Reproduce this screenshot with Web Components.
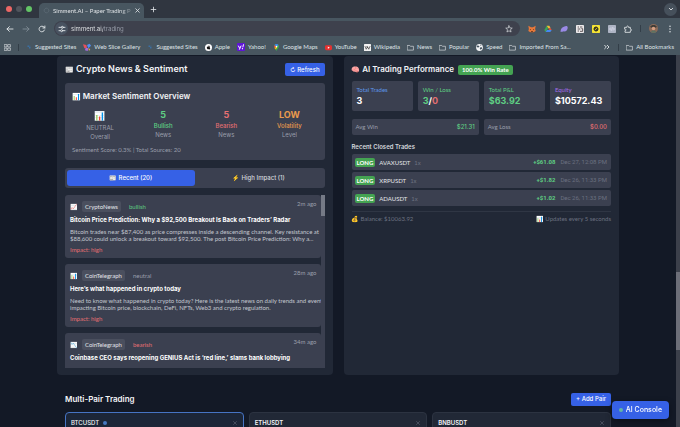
<!DOCTYPE html>
<html lang="en">
<head>
<meta charset="utf-8">
<title>Simment.AI - Paper Trading Platform</title>
<style>
  :root {
    --page: #131926;
    --panel: #212836;
    --card: #3b4050;
    --chip: #4a4f5e;
    --blue: #3661e6;
    --green: #5fce83;
    --red: #e46f72;
    --muted: #9a9fab;
    --dim: #6b7180;
    --small: Lato, "Noto Color Emoji", sans-serif;
  }
  html, body { height: 100%; }
  body {
    margin: 0;
    overflow: hidden;
    background: var(--page);
    color: #f3f4f6;
    font: 6px/8px Inter, "Noto Color Emoji", sans-serif;
  }
</style>
</head>
<body>
<trading-app></trading-app>

<script>
class BaseElement extends HTMLElement {
    constructor(){
        super();
        this.attachShadow({ mode : "open"});
    }
    attr(name){
        return this.getAttribute(name) || "";
    }
    render(){
        const template = document.createElement('template');
        template.innerHTML = `
        <style>
            * { box-sizing: border-box; }
            button { margin: 0; padding: 0; border: 0; background: none; color: inherit; font: inherit; cursor: pointer; }
            a { color: inherit; text-decoration: none; }
            h2, h3, h4, p, ul { margin: 0; padding: 0; font: inherit; }
            svg { display: block; flex: none; }
        </style>
        <style>${this.getStyles()}</style>
        ${this.getTemplate()}`;
        this.shadowRoot.appendChild(template.content.cloneNode(true));
    }
    connectedCallback(){
        if (!this.shadowRoot.childNodes.length) this.render();
    }
}

const stroke = (d, size = 8, width = 1.4) =>
    `<svg width="${size}" height="${size}" viewBox="0 0 12 12" fill="none" stroke="currentColor" stroke-width="${width}" stroke-linecap="round" stroke-linejoin="round" aria-hidden="true">${d}</svg>`;
const draw = (d, size = 8) =>
    `<svg width="${size}" height="${size}" viewBox="0 0 12 12" aria-hidden="true">${d}</svg>`;

const icons = {
    folder: stroke('<path d="M1 2.5h3.6l1.2 1.4H11v6.6H1z"/>', 7, 1.1),
    suggested: draw('<path d="M3 3h3v3H3zM6 6h3v3H6z" fill="#3a6fa3"/><path d="M6 3h3v3H6z" fill="#41617c"/>', 6),
    slice: draw('<path d="M0 2l5 1 1 4-4 1z" fill="#e8505b"/><path d="M6 3l4-2 2 3-4 4z" fill="#4f8df5"/><path d="M4 7l4 1-1 4-4-1z" fill="#a56be0"/><path d="M8 8l3 1-2 3z" fill="#e9b13e"/>', 8),
    apple: draw('<circle cx="6" cy="6" r="6" fill="#fff"/><path d="M6 4.3c1.400-.8 2.600.1 2.800.6-1 .7-.8 2.200.2 2.600-.8 2.200-1.700 2-3 1.600-1.500.5-2.800-.7-2.900-2.500 0-2 1.600-3 2.900-2.300zM6 3.800c0-.9.6-1.500 1.300-1.600 0 .9-.5 1.500-1.300 1.600z" fill="#111"/>', 7),
    yahoo: draw('<rect width="12" height="12" rx="1.500" fill="#5f14d8"/><path d="M2 4l2 4M6.200 4L3.400 10" stroke="#fff" stroke-width="1.500"/><path d="M9.800 2L8.700 6.500" stroke="#fff" stroke-width="1.500"/><circle cx="8.200" cy="8.500" r="1" fill="#fff"/>', 8),
    maps: draw('<path d="M6 0a4.300 4.300 0 0 1 4.300 4.300C10.300 7 7 8.500 6 12 5 8.500 1.700 7 1.700 4.300A4.300 4.300 0 0 1 6 0z" fill="#35a853"/><path d="M2.600 1.700L6 4.300l-3.300 3A5 5 0 0 1 2.600 1.700z" fill="#ea4335"/><path d="M6 0a4.300 4.300 0 0 1 3.500 1.800L6 4.300 2.600 1.700A4.300 4.300 0 0 1 6 0z" fill="#4285f4"/><path d="M2.700 7.300L6 4.300l1 2-2.500 3z" fill="#fbbc04"/><circle cx="6" cy="4.300" r="1.500" fill="#fff"/>', 7),
    youtube: draw('<rect y="2" width="12" height="8.500" rx="2.500" fill="#e5302f"/><path d="M4.800 4.300v3.900L8.200 6.250z" fill="#fff"/>', 7),
    wiki: draw('<rect width="12" height="12" rx="1" fill="#f2f2f2"/><path d="M1.500 3.500l2.300 5.500L6 4.500 8.200 9l2.300-5.500M4.500 3.500L6.500 7" stroke="#222" fill="none"/>', 7),
    speed: draw('<circle cx="6" cy="6" r="5.800" fill="#f4f6f8"/><path d="M2 2.500l3 .5 1 2-2.500 1L1 5zM7 6l3-.5.500 2L8 10 6.500 8zM7 1l2.500 1.500-1.500 1z" fill="#46545f"/>', 7)
};

class BrowserBookmark extends BaseElement {
    getTemplate(){
        return `<a href="#">${icons[this.attr("icon")]}<slot></slot></a>`;
    }
    getStyles(){
        return `
            :host { display: block; flex: none; }
            a { display: flex; align-items: center; gap: 3px; white-space: nowrap; }
        `;
    }
}

class BrowserChrome extends BaseElement {
    getTemplate(){
        const marks = [
            ["suggested", "Suggested Sites"], ["slice", "Web Slice Gallery"], ["suggested", "Suggested Sites"],
            ["apple", "Apple"], ["yahoo", "Yahoo!"], ["maps", "Google Maps"], ["youtube", "YouTube"],
            ["wiki", "Wikipedia"], ["folder", "News"], ["folder", "Popular"], ["speed", "Speed"],
            ["folder", "Imported From Sa..."]
        ];
        return `
        <div class="strip">
            <div class="lights"><i></i><i></i><i></i></div>
            <div class="tab">
                <span class="fav">${stroke('<circle cx="6" cy="6" r="4" stroke-dasharray="3 2"/>', 7, 1)}</span>
                <span class="name">Simment.AI – Paper Trading P</span>
                <button aria-label="Close tab">${stroke('<path d="M3 3l6 6M9 3l-6 6"/>', 7)}</button>
            </div>
            <button class="new" aria-label="New tab">${stroke('<path d="M6 2v8M2 6h8"/>', 7)}</button>
            <button class="down" aria-label="Search tabs">${stroke('<path d="M3.500 5L6 7.500 8.500 5"/>', 8)}</button>
        </div>
        <div class="tools">
            <button aria-label="Back">${stroke('<path d="M10.500 6h-9M5 2.500L1.500 6 5 9.500"/>')}</button>
            <button class="off" aria-label="Forward">${stroke('<path d="M1.500 6h9M7 2.500L10.500 6 7 9.500"/>')}</button>
            <button aria-label="Reload">${stroke('<path d="M9.800 7.500A4.200 4.200 0 1 1 9 3.200L10.200 4.500M10.300 1.500v3h-3"/>')}</button>
            <div class="omni">
                <button class="site" aria-label="Site information">${stroke('<path d="M1.500 3.500h3M8.500 3.500h2M1.500 8.500h2M7.500 8.500h3"/><circle cx="6.500" cy="3.500" r="1.500"/><circle cx="5.500" cy="8.500" r="1.500"/>', 8)}</button>
                <input type="text" aria-label="Address" value="simment.ai/trading" spellcheck="false">
                <button aria-label="Bookmark">${stroke('<path d="M6 1.200l1.400 3.200 3.500.3-2.700 2.300.9 3.500L6 8.700l-3.100 1.800.9-3.500L1.100 4.700l3.500-.3z"/>', 8, 1)}</button>
            </div>
            <div class="ext">
                <button aria-label="Wallet">${draw('<path d="M.5 1l4 2.500h3L11.500 1l-.8 5 .8 3-2.500 1.500-3 .8-3-.8L.5 9l.8-3z" fill="#e8793a"/><path d="M2.500 6l2 .5v1.500zM9.500 6l-2 .5v1.500zM4.500 9.500h3v1.500h-3z" fill="#51301f"/>')}</button>
                <button aria-label="Drive">${draw('<path d="M4 1h4l2 4H6z" fill="#f1bd32"/><path d="M4 1L.5 7.500l2 3L6 5z" fill="#3aa757"/><path d="M2.500 10.500h7l2-3H4.500z" fill="#4688f1"/><path d="M10 5l1.500 2.500H8L6.500 5z" fill="#e2523f"/>')}</button>
                <button aria-label="Feather">${draw('<path d="M1 10.500C.5 6 3.500 2 10 1.500c2 .5 2 3.500.5 6-1 2-3 2.500-4.500 1.800C4.500 10.500 2.500 9.500 1 10.500z" fill="#9a8ae6"/>')}</button>
                <button aria-label="Reader">${draw('<rect width="12" height="12" rx="1" fill="#ece9ea"/><path d="M2.500 3h2M6 3h3.500M2.500 6h4M8 5.500h2v4H6M2.500 9h2" stroke="#4b4347" stroke-width="1.300" fill="none"/>')}</button>
                <button aria-label="Norton">${draw('<rect width="12" height="12" rx="1" fill="#f5e334"/><circle cx="6" cy="6" r="3" fill="#4e4a14" stroke="#222" stroke-width="1.500"/><path d="M4 8l4-4" stroke="#f5e334"/>')}</button>
                <button aria-label="Code">${draw('<rect width="12" height="12" rx="1" fill="#aeb4c4"/><path d="M4 4L2.500 6 4 8M8 4l1.500 2L8 8M6.500 3.500l-1 5" stroke="#eef" fill="none"/>')}</button>
                <button aria-label="Extensions">${stroke('<path d="M1.500 3.500h2.700c-.6-2.600 3-2.600 2.500 0h2.800v2.700c2.400-.3 2.400 2.800 0 2.500v2.300h-8V8.500c2.200.2 2.200-2.500 0-2.300z"/>', 8, 1.3)}</button>
            </div>
            <i class="bar"></i>
            <button aria-label="Profile">${draw('<circle cx="6" cy="6" r="6" fill="#8d6b58"/><path d="M1.500 4C3 .5 9 .5 10.500 4L8 5H4z" fill="#3d3b37"/><circle cx="6" cy="6" r="2.300" fill="#d69f83"/><path d="M2.500 10.500C4 8 8 8 9.500 10.500A6 6 0 0 1 2.500 10.500z" fill="#5d7262"/>', 9)}</button>
            <button aria-label="Menu">${draw('<g fill="#e5e8ea"><circle cx="6" cy="2" r="1.100"/><circle cx="6" cy="6" r="1.100"/><circle cx="6" cy="10" r="1.100"/></g>')}</button>
        </div>
        <nav class="marks">
            <button aria-label="Apps">${stroke('<path d="M1 1h4v4H1zM7 1h4v4H7zM1 7h4v4H1zM7 7h4v4H7z"/>', 7, 1.1)}</button>
            <i class="bar"></i>
            ${marks.map(([icon, label]) => `<browser-bookmark icon="${icon}">${label}</browser-bookmark>`).join("")}
            <button class="more" aria-label="More bookmarks">${stroke('<path d="M2.500 3.500L5 6 2.500 8.500M6.500 3.500L9 6 6.500 8.500"/>')}</button>
            <i class="bar"></i>
            <browser-bookmark icon="folder">All Bookmarks</browser-bookmark>
        </nav>`;
    }
    getStyles(){
        return `
            :host { display: block; flex: none; background: #485660; color: #dfe3e6; font-family: var(--small); }
            .strip { display: flex; align-items: center; height: 18px; padding: 0 3px 0 6px; background: #303640; }
            .lights { display: flex; gap: 4px; margin-right: 7px; }
            .lights i { width: 6px; height: 6px; border-radius: 50%; background: #ec6765; }
            .lights i:nth-child(2) { background: #51555d; }
            .lights i:nth-child(3) { background: #63c466; }
            .tab { display: flex; align-items: center; align-self: flex-end; height: 15px; padding: 0 3px 0 4px; gap: 3px; border-radius: 5px 5px 0 0; background: #485660; }
            .fav { color: #687580; }
            .name { white-space: nowrap; -webkit-mask-image: linear-gradient(90deg, #000 85%, #0004); mask-image: linear-gradient(90deg, #000 85%, #0004); }
            .new { margin-left: 6px; }
            .down { display: grid; place-items: center; width: 13px; height: 13px; margin-left: auto; border-radius: 50%; background: #46505b; }
            .tools { display: flex; align-items: center; gap: 8px; height: 21px; padding: 0 6px; }
            .off { color: #7e8a93; }
            .omni { display: flex; align-items: center; flex: 1; height: 15px; padding: 0 7px 0 1px; gap: 3px; border-radius: 8px; background: #3e414d; }
            .site { display: grid; place-items: center; width: 13px; height: 13px; border-radius: 50%; background: #485260; }
            input {
                flex: 1; min-width: 0; height: 11px; padding: 0; border: 0; outline: 0;
                font: 6px/10px Inter, sans-serif;
                background: linear-gradient(90deg, #eef0f2 32px, #9a9fab 32px) text;
                -webkit-text-fill-color: transparent;
            }
            .ext { display: flex; gap: 8px; }
            .bar { width: 1px; height: 7px; background: #333e48; }
            .marks { display: flex; align-items: center; gap: 7px; height: 16px; padding: 0 6px 0 4px; }
            .more { margin-left: auto; }
        `;
    }
}

class DashPanel extends BaseElement {
    getTemplate(){
        return `
        <header>
            <h2><span>${this.attr("icon")}</span> ${this.attr("heading")}</h2>
            <slot name="action"></slot>
        </header>
        <slot></slot>`;
    }
    getStyles(){
        return `
            :host { display: block; min-width: 0; padding: 7px 8px; border-radius: 4px; background: var(--panel); }
            header { display: flex; align-items: center; height: 13px; gap: 4px; margin-bottom: 5px; }
            h2 { font-size: 8px; line-height: 12px; font-weight: 600; white-space: nowrap; }
            h2 span { font-size: 7px; }
            :host([large]) header { justify-content: space-between; margin-bottom: 7px; }
            :host([large]) h2 { font-size: 9px; }
        `;
    }
}

class UiButton extends BaseElement {
    getTemplate(){
        return `<button type="button"><slot></slot></button>`;
    }
    getStyles(){
        return `
            :host { display: block; flex: none; }
            button { display: flex; align-items: center; height: 13px; padding: 0 5px; border-radius: 2px; background: var(--blue); font: 500 6px/12px Inter, sans-serif; color: #fff; white-space: nowrap; }
            :host([floating]) button { height: 18px; padding: 0 7px; gap: 3px; border-radius: 4px; font-size: 7px; box-shadow: 0 2px 6px #0006; }
        `;
    }
}

class SentimentStat extends BaseElement {
    getTemplate(){
        return `
        <strong>${this.attr("value")}</strong>
        <span class="label">${this.attr("label")}</span>
        <span>${this.attr("sub")}</span>`;
    }
    getStyles(){
        return `
            :host { display: flex; flex-direction: column; align-items: center; color: var(--muted); line-height: 9px; }
            strong { font-size: 9px; line-height: 12px; font-weight: 700; color: var(--tone); }
            .label { color: var(--tone); font-weight: 500; }
            :host([emoji]) strong { line-height: 14px; }
            :host([emoji]) .label { font-weight: 400; }
        `;
    }
}

class SentimentOverview extends BaseElement {
    getTemplate(){
        return `
        <h3><span>📊</span> Market Sentiment Overview</h3>
        <div class="grid">
            <sentiment-stat emoji value="📊" label="NEUTRAL" sub="Overall" style="--tone: var(--muted)"></sentiment-stat>
            <sentiment-stat value="5" label="Bullish" sub="News" style="--tone: var(--green)"></sentiment-stat>
            <sentiment-stat value="5" label="Bearish" sub="News" style="--tone: var(--red)"></sentiment-stat>
            <sentiment-stat value="LOW" label="Volatility" sub="Level" style="--tone: #ea9a4d"></sentiment-stat>
        </div>
        <p>Sentiment Score: 0.3% | Total Sources: 20</p>`;
    }
    getStyles(){
        return `
            :host { display: block; padding: 7px 7px 6px; border-radius: 3px; background: var(--card); }
            h3 { font-size: 8px; line-height: 12px; font-weight: 600; margin-bottom: 6px; }
            h3 span { font-size: 7px; }
            .grid { display: grid; grid-template-columns: repeat(4, 1fr); gap: 7px; }
            p { margin-top: 5px; font-family: var(--small); color: var(--muted); }
        `;
    }
}

class NewsTabs extends BaseElement {
    getTemplate(){
        return `
        <button role="tab" aria-selected="true">📰 Recent (20)</button>
        <button role="tab" aria-selected="false">⚡ High Impact (1)</button>`;
    }
    getStyles(){
        return `
            :host { display: grid; grid-template-columns: 1fr 1fr; margin: 8px 0 7px; padding: 2px; border-radius: 3px; background: var(--card); }
            button { height: 16px; border-radius: 3px; font-weight: 500; color: #d5d8de; }
            [aria-selected=true] { background: var(--blue); color: #fff; }
        `;
    }
}

class NewsCard extends BaseElement {
    getTemplate(){
        return `
        <header>
            <span class="icon">${this.attr("icon")}</span>
            <span class="source">${this.attr("source")}</span>
            <span class="mood">${this.attr("mood")}</span>
            <time>${this.attr("time")}</time>
        </header>
        <h4><slot name="title"></slot></h4>
        <p><slot></slot></p>
        ${this.attr("impact") && `<p class="impact">Impact: ${this.attr("impact")}</p>`}`;
    }
    getStyles(){
        return `
            :host { display: block; padding: 6px 4px 4px 5px; border-radius: 3px; background: var(--card); font-family: var(--small); }
            :host(:last-child) { flex: 1; border-radius: 3px 3px 0 0; }
            header { display: flex; align-items: center; height: 11px; }
            .icon { width: 12px; font-size: 6px; }
            .source { padding: 0 3px; border-radius: 2px; background: var(--chip); line-height: 11px; color: #e3e5e9; }
            .mood { margin-left: 8px; color: var(--mood, var(--muted)); }
            time { align-self: flex-start; margin-left: auto; line-height: 6px; color: var(--muted); }
            h4 { margin: 3px 0 4px; font: 700 6px/9px Inter, sans-serif; white-space: nowrap; color: #fff; }
            p { line-height: 7px; white-space: nowrap; color: #c3c7cf; }
            .impact { margin-top: 4px; line-height: 8px; color: var(--red); }
        `;
    }
}

class NewsList extends BaseElement {
    getTemplate(){
        return `<div class="items"><slot></slot></div><div class="track"><i></i></div>`;
    }
    getStyles(){
        return `
            :host { display: flex; height: 173px; overflow: hidden; }
            .items { display: flex; flex-direction: column; flex: 1; min-width: 0; gap: 6px; }
            .track { width: 4px; background: var(--card); }
            i { display: block; height: 21px; background: #757a86; }
        `;
    }
}

class MetricCard extends BaseElement {
    getTemplate(){
        return `<span>${this.attr("label")}</span><strong><slot></slot></strong>`;
    }
    getStyles(){
        return `
            :host { display: flex; flex-direction: column; padding: 5px; height: 30px; border-radius: 2px; background: var(--card); }
            span { font-family: var(--small); color: var(--tone); }
            strong { font-size: 9px; line-height: 13px; font-weight: 700; color: var(--value, #fff); }
        `;
    }
}

class AverageRow extends BaseElement {
    getTemplate(){
        return `<span>${this.attr("label")}</span><strong>${this.attr("value")}</strong>`;
    }
    getStyles(){
        return `
            :host { display: flex; justify-content: space-between; align-items: center; height: 16px; padding: 0 4px; border-radius: 2px; background: var(--card); }
            span { font-family: var(--small); color: var(--muted); }
            strong { font-weight: 500; color: var(--tone); }
        `;
    }
}

class TradeTable extends BaseElement {
    getTemplate(){
        const trades = [
            ["AVAXUSDT", "+$61.08", "Dec 27, 12:08 PM"],
            ["XRPUSDT", "+$1.82", "Dec 26, 11:33 PM"],
            ["ADAUSDT", "+$1.02", "Dec 26, 11:33 PM"]
        ];
        return `
        <h3 id="cap">Recent Closed Trades</h3>
        <table aria-labelledby="cap">
            ${trades.map(([pair, gain, date]) => `
            <tr>
                <td><span class="side">LONG</span><span class="pair">${pair}</span><span class="lev">1x</span></td>
                <td class="gain">${gain}</td>
                <td class="date">${date}</td>
            </tr>`).join("")}
        </table>`;
    }
    getStyles(){
        return `
            :host { display: block; }
            h3 { margin: 7px 0 1px; line-height: 9px; font-weight: 600; color: #d5d8de; }
            table { width: 100%; border-collapse: separate; border-spacing: 0 2px; font: inherit; }
            td { height: 16px; padding: 0; background: var(--card); white-space: nowrap; }
            td:first-child { width: 100%; padding-left: 3px; border-radius: 2px 0 0 2px; }
            .side { display: inline-block; padding: 0 2px; margin-right: 4px; border-radius: 2px; background: #44a352; font: 700 6px/9px var(--small); color: #fff; }
            .pair { margin-right: 4px; font-family: var(--small); color: #e3e5e9; }
            .lev { font-family: var(--small); color: var(--dim); }
            td.gain { padding-right: 5px; font: 700 6px/8px Roboto, sans-serif; text-align: right; color: var(--green); }
            td.date { padding-right: 4px; border-radius: 0 2px 2px 0; font-family: Roboto, sans-serif; text-align: right; color: var(--dim); }
        `;
    }
}

class PairCard extends BaseElement {
    getTemplate(){
        return `<strong>${this.attr("pair")}</strong><i></i><button aria-label="Remove ${this.attr("pair")}">${stroke('<path d="M3 3l6 6M9 3l-6 6"/>', 6, 1)}</button>`;
    }
    getStyles(){
        return `
            :host { display: flex; align-items: center; gap: 4px; height: 40px; padding: 6px 5px 24px; border: 1px solid #2c3341; border-radius: 4px; background: var(--panel); }
            :host([active]) { border-color: #4674c4; background: #1c2638; }
            strong { font-weight: 600; }
            i { display: none; width: 4px; height: 4px; border-radius: 50%; background: #4678c0; }
            :host([active]) i { display: block; }
            :host([active]) strong { font-weight: 500; }
            button { margin-left: auto; color: var(--dim); }
        `;
    }
}

class TradingApp extends BaseElement {
    getTemplate(){
        return `
        <browser-chrome></browser-chrome>
        <div class="view">
            <main>
                <div class="columns">
                    <dash-panel large icon="📰" heading="Crypto News &amp; Sentiment">
                        <ui-button slot="action">↻ Refresh</ui-button>
                        <sentiment-overview></sentiment-overview>
                        <news-tabs role="tablist"></news-tabs>
                        <news-list>
                            <news-card icon="📈" source="CryptoNews" mood="bullish" time="2m ago" impact="high" style="--mood: var(--green)">
                                <span slot="title">Bitcoin Price Prediction: Why a $92,500 Breakout Is Back on Traders’ Radar</span>
                                Bitcoin trades near $87,400 as price compresses inside a descending channel. Key resistance at<br>$88,600 could unlock a breakout toward $92,500. The post Bitcoin Price Prediction: Why a...
                            </news-card>
                            <news-card icon="📊" source="CoinTelegraph" mood="neutral" time="28m ago" impact="high">
                                <span slot="title">Here’s what happened in crypto today</span>
                                Need to know what happened in crypto today? Here is the latest news on daily trends and events<br>impacting Bitcoin price, blockchain, DeFi, NFTs, Web3 and crypto regulation.
                            </news-card>
                            <news-card icon="📉" source="CoinTelegraph" mood="bearish" time="34m ago" style="--mood: var(--red)">
                                <span slot="title">Coinbase CEO says reopening GENIUS Act is ‘red line,’ slams bank lobbying</span>
                            </news-card>
                        </news-list>
                    </dash-panel>
                    <dash-panel icon="🧠" heading="AI Trading Performance">
                        <span slot="action" class="rate">100.0% Win Rate</span>
                        <div class="metrics">
                            <metric-card label="Total Trades" style="--tone: #5d97ea">3</metric-card>
                            <metric-card label="Win / Loss" style="--tone: var(--green)"><span class="up">3</span>/<span class="down">0</span></metric-card>
                            <metric-card label="Total P&amp;L" style="--tone: var(--green); --value: var(--green)">$63.92</metric-card>
                            <metric-card label="Equity" style="--tone: #a56ee8">$10572.43</metric-card>
                        </div>
                        <div class="averages">
                            <average-row label="Avg Win" value="$21.31" style="--tone: var(--green)"></average-row>
                            <average-row label="Avg Loss" value="$0.00" style="--tone: var(--red)"></average-row>
                        </div>
                        <trade-table></trade-table>
                        <footer><span>💰 Balance: $10063.92</span><span>📊 Updates every 5 seconds</span></footer>
                    </dash-panel>
                </div>
                <section>
                    <header><h2>Multi-Pair Trading</h2><ui-button>+ Add Pair</ui-button></header>
                    <div class="pairs">
                        <pair-card pair="BTCUSDT" active></pair-card>
                        <pair-card pair="ETHUSDT"></pair-card>
                        <pair-card pair="BNBUSDT"></pair-card>
                    </div>
                </section>
            </main>
            <div class="scroll"><i></i></div>
        </div>
        <ui-button class="console" floating><i class="dot"></i>AI Console</ui-button>`;
    }
    getStyles(){
        return `
            :host { display: flex; flex-direction: column; height: 100vh; }
            .view { display: flex; flex: 1; min-height: 0; overflow: hidden; }
            main { flex: 1; padding: 1px 57px 0; }
            .columns { display: grid; grid-template-columns: 1fr 1fr; gap: 11px; }
            .rate { padding: 0 4px; border-radius: 2px; background: #44a352; font: 700 6px/10px var(--small); color: #fff; white-space: nowrap; }
            .metrics { display: grid; grid-template-columns: repeat(4, 1fr); gap: 5px; }
            .averages { display: grid; grid-template-columns: 1fr 1fr; gap: 5px; margin-top: 8px; }
            .up { color: var(--green); }
            .down { color: var(--red); }
            footer { display: flex; justify-content: space-between; margin-top: 3px; padding-top: 3px; border-top: 1px solid #2f3644; font-family: var(--small); color: var(--dim); }
            section { padding: 17px 8px 0; }
            section header { display: flex; justify-content: space-between; align-items: center; margin-bottom: 6px; }
            h2 { font-size: 8px; line-height: 14px; font-weight: 600; }
            .pairs { display: grid; grid-template-columns: repeat(3, 1fr); gap: 5px; }
            .scroll { display: flex; align-items: flex-end; width: 4px; padding-bottom: 77px; background: #3c404b; }
            .scroll i { flex: 1; height: 78px; background: #6c6e78; }
            .console { position: fixed; right: 11px; bottom: 8px; }
            .dot { width: 4px; height: 4px; border-radius: 50%; background: #62b5a5; }
        `;
    }
}

customElements.define('browser-bookmark', BrowserBookmark);
customElements.define('browser-chrome', BrowserChrome);
customElements.define('ui-button', UiButton);
customElements.define('dash-panel', DashPanel);
customElements.define('sentiment-stat', SentimentStat);
customElements.define('sentiment-overview', SentimentOverview);
customElements.define('news-tabs', NewsTabs);
customElements.define('news-card', NewsCard);
customElements.define('news-list', NewsList);
customElements.define('metric-card', MetricCard);
customElements.define('average-row', AverageRow);
customElements.define('trade-table', TradeTable);
customElements.define('pair-card', PairCard);
customElements.define('trading-app', TradingApp);
</script>
</body>
</html>
